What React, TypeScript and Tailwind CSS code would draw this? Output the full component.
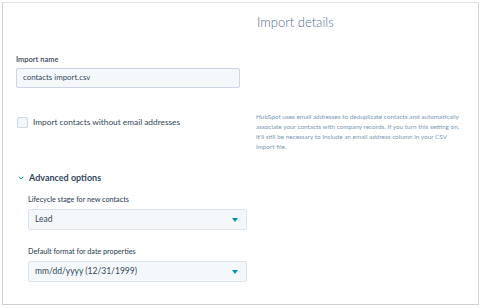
import { ChevronDown } from "lucide-react";

function SelectBox({ value }: { value: string }) {
  return (
    <div className="flex items-center justify-between w-[219px] h-[21px] px-[6px] bg-[#f5f8fa] border border-[#dfe3eb] rounded-[2px] text-[8.5px] text-[#33475b]">
      <span>{value}</span>
      <span className="mr-[2px] w-0 h-0 border-l-[3.5px] border-r-[3.5px] border-t-[4px] border-l-transparent border-r-transparent border-t-[#0091ae]" />
    </div>
  );
}

export default function App() {
  return (
    <div className="w-[482px] h-[308px] bg-white pt-[2px] pl-[2px] font-['Lato','Open_Sans',sans-serif]">
      <div className="w-[477px] h-[303px] border border-[#e3e3e3] border-l-[#cfcfcf] border-b-[#cfcfcf] border-r-[#d6d6d6] flex flex-col">
        <h1 className="pt-[11px] pl-[254px] text-[13px] leading-[16px] font-light text-[#516f90]">
          Import details
        </h1>

        <div className="pl-[13px] mt-[25px]">
          <label className="block text-[7.5px] leading-[10px] font-semibold text-[#33475b]">
            Import name
          </label>
          <div className="mt-[3px] w-[224px] h-[20px] flex items-center px-[6px] bg-[#f5f8fa] border border-[#cbd6e2] rounded-[2px] text-[7.9px] text-[#33475b]">
            contacts import.csv
          </div>
        </div>

        <div className="pl-[13px] mt-[24px] flex gap-[16px]">
          <div className="w-[224px] flex items-start pt-[5px]">
            <span className="ml-[1px] w-[11px] h-[11px] border border-[#cbd6e2] rounded-[2px] bg-[#f5f8fa]" />
            <span className="ml-[5px] text-[8.3px] leading-[11px] text-[#33475b]">
              Import contacts without email addresses
            </span>
          </div>
          <p className="w-[210px] whitespace-nowrap text-[6.4px] leading-[10px] text-[#7c98b6]">
            HubSpot uses email addresses to deduplicate contacts and automatically
            <br />
            associate your contacts with company records. If you turn this setting on,
            <br />
            it'll still be necessary to include an email address column in your CSV
            <br />
            import file.
          </p>
        </div>

        <div className="pl-[14px] mt-[20px] flex items-center gap-[4px] text-[#33475b]">
          <ChevronDown className="w-[8px] h-[8px] text-[#0091ae]" strokeWidth={3} />
          <span className="text-[9px] leading-[12px] font-bold">Advanced options</span>
        </div>

        <div className="pl-[25px] mt-[11px]">
          <label className="block text-[7.2px] leading-[10px] font-medium text-[#33475b]">
            Lifecycle stage for new contacts
          </label>
          <div className="mt-[4px]">
            <SelectBox value="Lead" />
          </div>
          <label className="block mt-[17px] text-[7.2px] leading-[10px] font-medium text-[#33475b]">
            Default format for date properties
          </label>
          <div className="mt-[4px]">
            <SelectBox value="mm/dd/yyyy (12/31/1999)" />
          </div>
        </div>
      </div>
    </div>
  );
}
